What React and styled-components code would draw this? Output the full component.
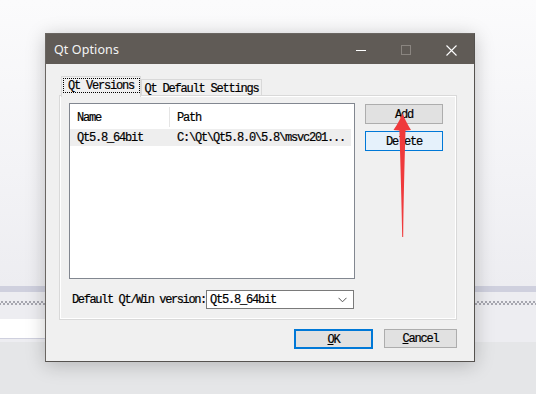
import React from 'react';
import styled, { createGlobalStyle } from 'styled-components';

const GlobalStyle = createGlobalStyle`
    html, body {
        margin: 0;
        padding: 0;
        background: #ececf0;
    }
`;

const mono = `"Liberation Mono", "DejaVu Sans Mono", monospace`;

const App = () => {
    return (
        <Desktop>
            <GlobalStyle />
            <TopArea />
            <LavenderBar />
            <DotBand>
                <Dots />
            </DotBand>
            <FieldStrip>
                <WhiteField />
            </FieldStrip>
            <BottomArea />

            <Dialog>
                <TitleBar>
                    <Title>Qt Options</Title>
                    <Controls>
                        <CtrlButton>
                            <svg width="11" height="11" viewBox="0 0 11 11">
                                <line x1="0" y1="5.5" x2="10" y2="5.5" stroke="#fff" strokeWidth="1" />
                            </svg>
                        </CtrlButton>
                        <CtrlButton>
                            <svg width="11" height="11" viewBox="0 0 11 11">
                                <rect x="0.5" y="0.5" width="9" height="9" fill="none" stroke="#8a8580" strokeWidth="1" />
                            </svg>
                        </CtrlButton>
                        <CtrlButton>
                            <svg width="11" height="11" viewBox="0 0 11 11">
                                <path d="M0.5 0.5 L10.5 10.5 M10.5 0.5 L0.5 10.5" stroke="#fff" strokeWidth="1.1" />
                            </svg>
                        </CtrlButton>
                    </Controls>
                </TitleBar>

                <Body>
                    <TabRow>
                        <Tab active>
                            <FocusRect>Qt Versions</FocusRect>
                        </Tab>
                        <Tab>Qt Default Settings</Tab>
                    </TabRow>
                    <Panel>
                        <TopRow>
                            <ListView>
                                <HeaderRow>
                                    <HeaderCell width={100}>Name</HeaderCell>
                                    <HeaderCell>Path</HeaderCell>
                                </HeaderRow>
                                <ItemRow>
                                    <ItemCell width={100}>Qt5.8_64bit</ItemCell>
                                    <ItemCell>C:\Qt\Qt5.8.0\5.8\msvc201...</ItemCell>
                                </ItemRow>
                            </ListView>
                            <SideButtons>
                                <PushButton>Add</PushButton>
                                <PushButton focused>Delete</PushButton>
                            </SideButtons>
                        </TopRow>
                        <DefaultRow>
                            <Label>Default Qt/Win version:</Label>
                            <Combo>
                                <span>Qt5.8_64bit</span>
                                <svg width="9" height="6" viewBox="0 0 9 6">
                                    <polyline points="0.5,0.8 4.5,4.8 8.5,0.8" fill="none" stroke="#555" strokeWidth="1" />
                                </svg>
                            </Combo>
                        </DefaultRow>
                    </Panel>
                    <Footer>
                        <DialogButton primary>
                            <u>O</u>K
                        </DialogButton>
                        <DialogButton>
                            <u>C</u>ancel
                        </DialogButton>
                    </Footer>
                </Body>
            </Dialog>

            <Arrow width="30" height="130" viewBox="0 0 30 130">
                <path
                    d="M15.5 0 C17 5 21 12 24 17 L18.5 17.5 C17.5 50 16.5 90 16.2 124 L15.2 124 C14.6 90 13.4 50 12.4 17.5 L6.5 17 C10 12 14 5 15.5 0 Z"
                    fill="#ef3a3c"
                />
            </Arrow>
        </Desktop>
    );
};

export default App;

// Desktop background
const Desktop = styled.div`
    position: relative;
    width: 536px;
    height: 394px;
    overflow: hidden;
    display: flex;
    flex-direction: column;
    background: #ececf0;
`;

const TopArea = styled.div`
    flex: 0 0 286px;
    background: linear-gradient(180deg, #fbfbfc 0%, #f3f3f6 60%, #ededf1 100%);
`;

const LavenderBar = styled.div`
    flex: 0 0 6px;
    background: #cfd0de;
`;

const DotBand = styled.div`
    flex: 0 0 27px;
    padding-top: 9px;
    box-sizing: border-box;
    background: #ededf1;
`;

const Dots = styled.div`
    height: 4px;
    background-image:
        radial-gradient(circle, #a7a7b0 0.8px, transparent 1px),
        radial-gradient(circle, #a7a7b0 0.8px, transparent 1px);
    background-size: 4px 4px, 4px 4px;
    background-position: 0 -1px, 2px 1px;
    background-repeat: repeat-x;
`;

const FieldStrip = styled.div`
    flex: 0 0 23px;
    background: #ededf1;
`;

const WhiteField = styled.div`
    width: 120px;
    height: 19px;
    background: #ffffff;
    border-bottom: 1px solid #cfd0de;
`;

const BottomArea = styled.div`
    flex: 1;
    background: #e5e6e8;
`;

// Dialog window
const Dialog = styled.div`
    position: absolute;
    left: 45px;
    top: 33px;
    width: 430px;
    height: 329px;
    box-sizing: border-box;
    border: 1px solid #6a6662;
    border-right-color: #55524f;
    border-bottom-color: #55524f;
    background: #f0f0f0;
    box-shadow: 0 3px 18px rgba(0, 0, 0, 0.22);
    display: flex;
    flex-direction: column;
    font-family: ${mono};
    font-size: 12px;
    letter-spacing: -1.2px;
    color: #000;
    -webkit-text-stroke: 0.2px #000;
`;

const TitleBar = styled.div`
    flex: 0 0 30px;
    background: #605b56;
    display: flex;
    align-items: center;
    justify-content: space-between;
    padding-left: 8px;
    -webkit-text-stroke: 0;
    letter-spacing: 0;
`;

const Title = styled.span`
    font-family: "Noto Sans", "Open Sans", sans-serif;
    font-size: 12.5px;
    color: #f4f4f4;
    letter-spacing: 0.1px;
`;

const Controls = styled.div`
    display: flex;
    height: 100%;
`;

const CtrlButton = styled.div`
    width: 45px;
    height: 100%;
    display: flex;
    align-items: center;
    justify-content: center;
    padding-top: 1px;
`;

const Body = styled.div`
    flex: 1;
    padding: 12px 16px 0 13px;
    display: flex;
    flex-direction: column;
`;

const TabRow = styled.div`
    display: flex;
    align-items: flex-end;
    height: 19px;
    padding-left: 2px;
    position: relative;
    z-index: 1;
`;

const Tab = styled.div`
    box-sizing: border-box;
    display: flex;
    align-items: center;
    justify-content: center;
    border: 1px solid #d9d9d9;
    border-bottom: none;
    width: ${p => (p.active ? '80px' : '121px')};
    height: ${p => (p.active ? '21px' : '16px')};
    margin-bottom: ${p => (p.active ? '-2px' : '0')};
    background: #f0f0f0;
    padding-top: ${p => (p.active ? '0' : '2px')};
`;

const FocusRect = styled.span`
    display: flex;
    align-items: center;
    justify-content: center;
    box-sizing: border-box;
    width: 77px;
    height: 15px;
    border: 1px dotted #000;
    margin-bottom: 3px;
`;

const Panel = styled.div`
    box-sizing: border-box;
    width: 398px;
    height: 225px;
    border: 1px solid #d9d9d9;
    box-shadow: inset 1px 1px 0 #ffffff, inset -1px -1px 0 #ffffff;
    background: #f0f0f0;
    padding: 7px 0 0 9px;
    display: flex;
    flex-direction: column;
`;

const TopRow = styled.div`
    display: flex;
    gap: 10px;
`;

const ListView = styled.div`
    box-sizing: border-box;
    width: 286px;
    height: 176px;
    border: 1px solid #828790;
    background: #ffffff;
    padding: 1px 3px 0 0;
`;

const HeaderRow = styled.div`
    display: flex;
    height: 22px;
    margin-bottom: 2px;
`;

const HeaderCell = styled.div`
    box-sizing: border-box;
    ${p => (p.width ? `flex: 0 0 ${p.width}px;` : 'flex: 1;')}
    padding: 2px 0 0 7px;
    display: flex;
    align-items: center;
    border-right: ${p => (p.width ? '1px solid #e5e5e5' : 'none')};
    margin: 2px 0 0;
`;

const ItemRow = styled.div`
    display: flex;
    height: 17px;
    background: #eeeeee;
`;

const ItemCell = styled.div`
    box-sizing: border-box;
    ${p => (p.width ? `flex: 0 0 ${p.width}px;` : 'flex: 1;')}
    padding-left: 7px;
    display: flex;
    align-items: center;
    white-space: nowrap;
`;

const SideButtons = styled.div`
    display: flex;
    flex-direction: column;
    gap: 7px;
    padding-top: 1px;
`;

const PushButton = styled.div`
    box-sizing: border-box;
    width: 78px;
    height: 20px;
    display: flex;
    align-items: center;
    justify-content: center;
    padding-top: 1px;
    background: ${p => (p.focused ? '#e5f1fb' : '#e1e1e1')};
    border: 1px solid ${p => (p.focused ? '#0078d7' : '#adadad')};
`;

const DefaultRow = styled.div`
    display: flex;
    align-items: center;
    margin-top: 11px;
    padding-left: 3px;
`;

const Label = styled.span`
    flex: 0 0 134px;
    white-space: nowrap;
    letter-spacing: -1.38px;
`;

const Combo = styled.div`
    box-sizing: border-box;
    width: 148px;
    height: 19px;
    border: 1px solid #7a7a7a;
    background: #ffffff;
    display: flex;
    align-items: center;
    justify-content: space-between;
    padding: 0 6px 0 3px;
`;

const Footer = styled.div`
    display: flex;
    justify-content: flex-end;
    gap: 11px;
    width: 398px;
    margin-top: 9px;
`;

const DialogButton = styled.div`
    box-sizing: border-box;
    width: ${p => (p.primary ? '79px' : '73px')};
    height: ${p => (p.primary ? '20px' : '19px')};
    display: flex;
    align-items: center;
    justify-content: center;
    padding-top: 1px;
    background: #e1e1e1;
    border: ${p => (p.primary ? '2px solid #0078d7' : '1px solid #adadad')};
`;

// Annotation overlay
const Arrow = styled.svg`
    position: absolute;
    left: 387px;
    top: 113px;
    pointer-events: none;
`;
